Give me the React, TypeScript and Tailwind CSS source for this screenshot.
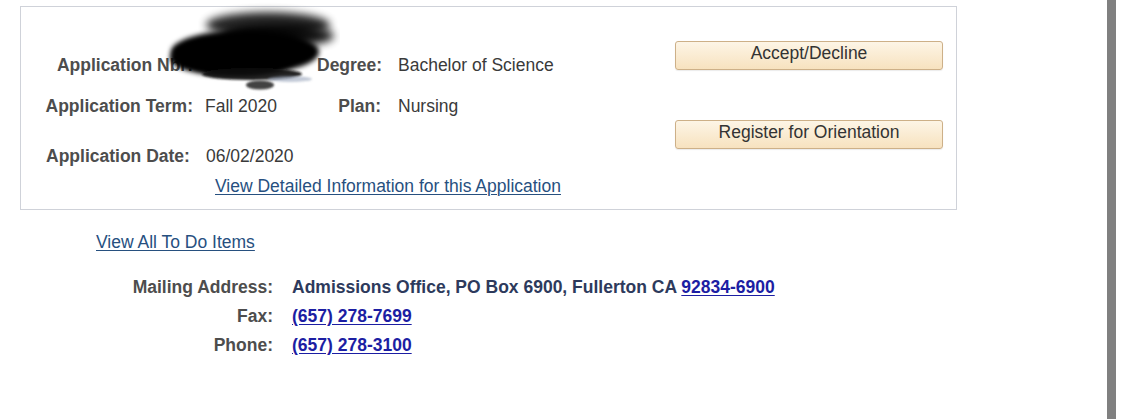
import React from 'react';

const label = "font-bold text-[#4d4d4d]";
const value = "text-[#3a3a3a]";
const link = "text-[#27507f] underline underline-offset-2 decoration-1";

// Redaction scribble over the application number
const Scribble = () => (
  <svg className="absolute left-[160px] top-0 pointer-events-none" width="180" height="100" viewBox="0 0 180 100">
    <defs>
      <filter id="blurSoft" x="-30%" y="-80%" width="160%" height="260%">
        <feGaussianBlur stdDeviation="4" />
      </filter>
      <filter id="blurMid" x="-30%" y="-60%" width="160%" height="220%">
        <feGaussianBlur stdDeviation="2.5" />
      </filter>
      <filter id="blurTiny" x="-30%" y="-60%" width="160%" height="220%">
        <feGaussianBlur stdDeviation="1.2" />
      </filter>
    </defs>
    <ellipse cx="108" cy="25" rx="62" ry="13" fill="#000" opacity="0.85" filter="url(#blurSoft)" />
    <ellipse cx="118" cy="36" rx="56" ry="11" fill="#000" opacity="0.9" filter="url(#blurSoft)" />
    <ellipse cx="85" cy="52" rx="74" ry="22" fill="#000" filter="url(#blurMid)" />
    <ellipse cx="72" cy="58" rx="62" ry="18" fill="#000" filter="url(#blurMid)" />
    <ellipse cx="92" cy="74" rx="50" ry="6" fill="#111" opacity="0.9" filter="url(#blurTiny)" />
    <ellipse cx="130" cy="79" rx="22" ry="3" fill="#9aa6bc" opacity="0.6" filter="url(#blurTiny)" />
    <ellipse cx="100" cy="85" rx="14" ry="4.5" fill="#222" opacity="0.85" filter="url(#blurTiny)" />
  </svg>
);

const OrangeButton = ({ children }: { children: React.ReactNode }) => (
  <button className="w-[268px] h-[29px] rounded-[3px] border border-[#cdb088] bg-gradient-to-b from-[#fdf5e6] to-[#f7e2bf] text-[17.5px] leading-none text-[#333] pb-[3px] shadow-[0_1px_1px_rgba(0,0,0,0.08)]">
    {children}
  </button>
);

const App = () => {
  return (
    <div className="relative flex h-[419px] w-[1124px] bg-white font-['Liberation_Sans',Arial,sans-serif] text-[17.5px] leading-[24px] overflow-hidden">
      <div className="flex-1">
        {/* Application box */}
        <div className="ml-[20px] mt-[6px] w-[937px] h-[204px] box-border border border-[#cfd2d9] flex justify-between">
          <div className="pt-[46px]">
            <div className="flex">
              <span className={`${label} w-[172px] text-right`}>Application Nbr:</span>
              <span className={`${value} w-[112px] ml-[12px]`}></span>
              <span className={`${label} w-[64px] text-right`}>Degree:</span>
              <span className={`${value} ml-[17px]`}>Bachelor of Science</span>
            </div>
            <div className="flex mt-[17px]">
              <span className={`${label} w-[172px] text-right`}>Application Term:</span>
              <span className={`${value} w-[112px] ml-[12px]`}>Fall 2020</span>
              <span className={`${label} w-[64px] text-right`}>Plan:</span>
              <span className={`${value} ml-[17px]`}>Nursing</span>
            </div>
            <div className="flex mt-[26px] pl-[25px]">
              <span className={`${label} w-[160px]`}>Application Date:</span>
              <span className={value}>06/02/2020</span>
            </div>
            <div className="mt-[6px] pl-[194px]">
              <a href="#" className={link}>View Detailed Information for this Application</a>
            </div>
          </div>
          <div className="flex flex-col mt-[34px] mr-[13px] gap-[50px]">
            <OrangeButton>Accept/Decline</OrangeButton>
            <OrangeButton>Register for Orientation</OrangeButton>
          </div>
        </div>

        <div className="ml-[96px] mt-[20px]">
          <a href="#" className={link}>View All To Do Items</a>
        </div>

        {/* Contact details */}
        <div className="mt-[21px] grid grid-cols-[177px_auto] gap-x-[19px] gap-y-[5px] ml-[96px] w-max">
          <span className={`${label} text-right`}>Mailing Address:</span>
          <span className="font-bold text-[#2d3a5c]">
            Admissions Office, PO Box 6900, Fullerton CA{' '}
            <a href="#" className="text-[#1c1ea3] underline underline-offset-2">92834-6900</a>
          </span>
          <span className={`${label} text-right`}>Fax:</span>
          <a href="#" className="font-bold text-[#1c1ea3] underline underline-offset-2">(657) 278-7699</a>
          <span className={`${label} text-right`}>Phone:</span>
          <a href="#" className="font-bold text-[#1c1ea3] underline underline-offset-2">(657) 278-3100</a>
        </div>
      </div>

      {/* Scrollbar strip */}
      <div className="w-[9px] h-full bg-[#808080]" />
      <div className="w-[8px] h-full bg-white" />

      <Scribble />
    </div>
  );
};

export default App;
